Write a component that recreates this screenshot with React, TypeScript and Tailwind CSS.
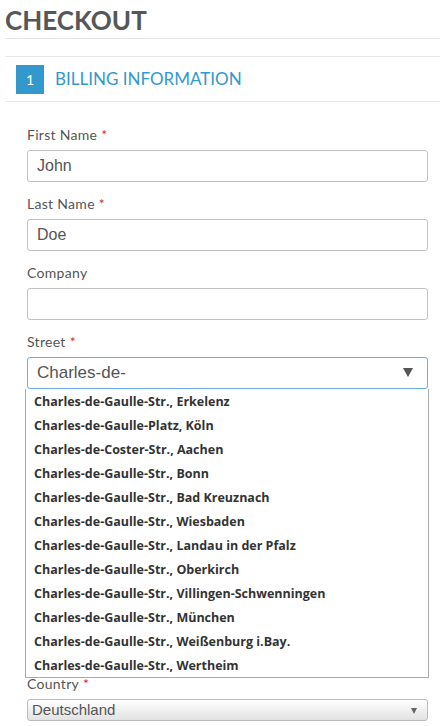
import { useState } from 'react';

const suggestions = [
  'Charles-de-Gaulle-Str., Erkelenz',
  'Charles-de-Gaulle-Platz, Köln',
  'Charles-de-Coster-Str., Aachen',
  'Charles-de-Gaulle-Str., Bonn',
  'Charles-de-Gaulle-Str., Bad Kreuznach',
  'Charles-de-Gaulle-Str., Wiesbaden',
  'Charles-de-Gaulle-Str., Landau in der Pfalz',
  'Charles-de-Gaulle-Str., Oberkirch',
  'Charles-de-Gaulle-Str., Villingen-Schwenningen',
  'Charles-de-Gaulle-Str., München',
  'Charles-de-Gaulle-Str., Weißenburg i.Bay.',
  'Charles-de-Gaulle-Str., Wertheim',
];

function Label({ text, required }: { text: string; required?: boolean }) {
  return (
    <label className="block h-5 mb-[5px] text-[14px] leading-5 tracking-[0.3px] text-[#555] font-['Lato',sans-serif]">
      {text}
      {required && <span className="ml-1 text-[#e02b27]">*</span>}
    </label>
  );
}

function TextField({ label, value, required, last }: { label: string; value: string; required?: boolean; last?: boolean }) {
  return (
    <div className={last ? 'mb-[9px]' : 'mb-3'}>
      <Label text={label} required={required} />
      <input
        readOnly
        value={value}
        className="block w-full h-8 px-[9px] border border-[#c2c2c2] rounded-[3px] bg-white text-[16px] text-[#555] font-['Liberation_Sans',sans-serif] outline-none"
      />
    </div>
  );
}

export default function App() {
  const [street] = useState('Charles-de-');

  return (
    <div className="min-h-screen bg-white pl-[5px] overflow-hidden">
      {/* Title */}
      <h1 className="h-[39px] pt-[5px] text-[26px] leading-[30px] font-bold text-[#575757] font-['Lato',sans-serif] border-b border-[#e8e8e8]">
        CHECKOUT
      </h1>

      <div className="mt-[17px] border-t border-[#e8e8e8]">
        {/* Step header */}
        <div className="flex items-center gap-[11px] h-[45px] pl-[11px] border-b border-[#e8e8e8]">
          <span className="flex items-center justify-center w-7 h-[29px] bg-[#3399cc] text-white text-[14px] font-['Lato',sans-serif]">
            1
          </span>
          <span className="text-[17px] text-[#3399cc] font-['Lato',sans-serif]">BILLING INFORMATION</span>
        </div>

        {/* Form */}
        <div className="pl-[22px] pr-[12px] pt-[23px]">
          <TextField label="First Name" value="John" required />
          <TextField label="Last Name" value="Doe" required />
          <TextField label="Company" value="" />

          <div className="mb-3 relative">
            <Label text="Street" required />
            <div className="relative">
              <input
                readOnly
                value={street}
                className="block w-full h-8 px-[9px] border border-[#66afe9] rounded-[3px] bg-white text-[17px] text-[#555] font-['Liberation_Sans',sans-serif] outline-none"
              />
              <span className="absolute right-[15px] top-[11px] w-0 h-0 border-l-[5.5px] border-r-[5.5px] border-t-[9px] border-l-transparent border-r-transparent border-t-[#555]" />
            </div>
            <ul className="absolute z-10 left-[-2px] right-[-1px] top-full bg-white border border-[#aaa] border-t-0 font-['Open_Sans',sans-serif]">
              {suggestions.map((s) => (
                <li key={s} className="h-6 pl-2 pt-[2px] text-[12.5px] leading-[22px] font-bold text-[#333] whitespace-nowrap">
                  {s}
                </li>
              ))}
            </ul>
          </div>

          {/* Fields covered by the suggestion list */}
          <div className="invisible">
            <TextField label="House Number" value="" required />
            <TextField label="Postcode" value="" required />
            <TextField label="City" value="" required />
            <TextField label="State" value="" last />
          </div>

          <div>
            <Label text="Country" required />
            <div className="relative h-[22px] border border-[#bbb] rounded-[3px] bg-gradient-to-b from-white to-[#e2e2e2]">
              <span className="block pl-1 text-[15px] leading-5 text-[#555] font-['Liberation_Sans',sans-serif]">Deutschland</span>
              <span className="absolute right-[10px] top-[8px] w-0 h-0 border-l-[3.5px] border-r-[3.5px] border-t-[6px] border-l-transparent border-r-transparent border-t-[#666]" />
            </div>
          </div>
        </div>
      </div>
    </div>
  );
}
